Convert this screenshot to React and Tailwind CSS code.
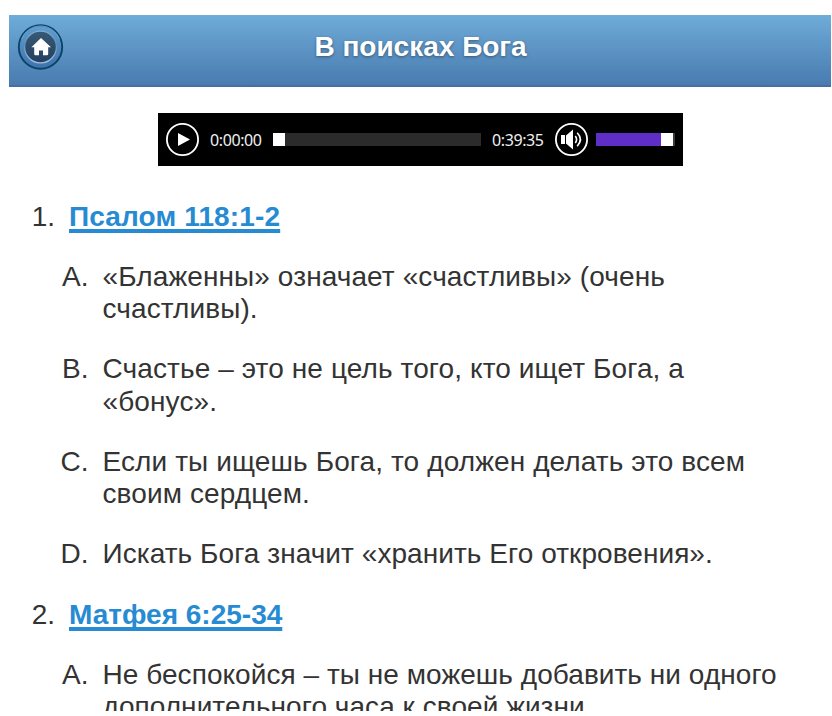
const outline = [
  {
    title: 'Псалом 118:1-2',
    spacing: 'tracking-[0.14px]',
    points: [
      { spacing: 'tracking-[0.1px]', lines: ['«Блаженны» означает «счастливы» (очень', 'счастливы).'] },
      { spacing: 'tracking-[0.11px]', lines: ['Счастье – это не цель того, кто ищет Бога, а', '«бонус».'] },
      { spacing: 'tracking-[0.11px]', lines: ['Если ты ищешь Бога, то должен делать это всем', 'своим сердцем.'] },
      { spacing: 'tracking-[0.06px]', lines: ['Искать Бога значит «хранить Его откровения».'] },
    ],
  },
  {
    title: 'Матфея 6:25-34',
    spacing: 'tracking-normal',
    points: [
      {
        spacing: 'tracking-[0.05px]',
        lines: ['Не беспокойся – ты не можешь добавить ни одного', 'дополнительного часа к своей жизни.'],
      },
    ],
  },
];

function HomeButton() {
  return (
    <button className="ml-[8px] mt-[8px] h-[48px] w-[48px] shrink-0" aria-label="home">
      <svg width="48" height="48" viewBox="0 0 48 48">
        <defs>
          <linearGradient id="ring" x1="0" y1="0" x2="0" y2="1">
            <stop offset="0" stopColor="#5f9fce" />
            <stop offset="1" stopColor="#3f72ab" />
          </linearGradient>
          <linearGradient id="disc" x1="0" y1="0" x2="0" y2="1">
            <stop offset="0" stopColor="#375a75" />
            <stop offset="1" stopColor="#263f60" />
          </linearGradient>
          <linearGradient id="rim" x1="0" y1="0" x2="0" y2="1">
            <stop offset="0" stopColor="#7eaed6" />
            <stop offset="0.4" stopColor="#5f8fbb" />
            <stop offset="1" stopColor="#a3c3e6" />
          </linearGradient>
        </defs>
        <circle cx="23.5" cy="24" r="21.7" fill="url(#ring)" stroke="#0b4468" strokeWidth="1.9" />
        <path d="M4.5 16a20.3 20.3 0 0 1 38 0" fill="none" stroke="#8bbce2" strokeWidth="1" opacity=".65" />
        <circle cx="23.5" cy="24" r="15.9" fill="url(#disc)" stroke="url(#rim)" strokeWidth="1.3" />
        <path d="M24 15 34 24.2H31.2V31Q31.2 32.2 30 32.2H26V27.4H22V32.2H18.4Q17.2 32.2 17.2 31V24.2H14.4Z" fill="#fff" />
      </svg>
    </button>
  );
}

function Player() {
  return (
    <div className="mx-auto mt-[26px] flex h-[53px] w-[525px] shrink-0 items-center bg-black pl-2 font-['Noto_Sans','Open_Sans',sans-serif] text-[16px] text-[#f0f0f0]">
      <svg width="33" height="33" viewBox="0 0 33 33">
        <circle cx="16.5" cy="16.5" r="15.6" fill="none" stroke="#fff" strokeWidth="1.8" />
        <path d="M12 10v13l12-6.5Z" fill="#fff" />
      </svg>
      <span className="ml-[11px] w-[52px] whitespace-nowrap tracking-[-0.4px]">0:00:00</span>
      <div className="ml-[11px] h-[13px] w-[208px] bg-[#2b2b2b]">
        <div className="h-full w-3 bg-white" />
      </div>
      <span className="ml-[11px] w-[52px] whitespace-nowrap tracking-[-0.4px]">0:39:35</span>
      <svg className="ml-[11px]" width="33" height="33" viewBox="0 0 33 33">
        <circle cx="16.5" cy="16.5" r="15.6" fill="none" stroke="#fff" strokeWidth="1.8" />
        <path d="M6 12h4v9H6ZM11 12.5 18 6.5v20l-7-6Z" fill="#fff" />
        <path d="M20.3 13q2.6 3.5 0 7M22.2 9.8q6.4 6.7 0 13.4" fill="none" stroke="#fff" strokeWidth="1.6" />
      </svg>
      <div className="ml-2 flex h-[13px] w-[79px] bg-[#3a3a3a]">
        <div className="w-[65px] bg-[#5f2ec7]" />
        <div className="w-3 bg-white" />
      </div>
    </div>
  );
}

export default function App() {
  return (
    <div className="h-[716px] w-[832px] bg-white font-['Liberation_Sans',Arial,sans-serif] text-[#333]">
      <div className="flex h-[711px] flex-col overflow-hidden pt-[15px]">
        <header className="ml-[9px] flex h-[72px] w-[822px] shrink-0 border-b-2 border-[#456f9f] bg-linear-to-b from-[#6facd8] to-[#497bb0]">
          <HomeButton />
          <h1 className="mt-[16px] flex-1 pr-[55px] text-center text-[28px] leading-8 font-bold text-white [text-shadow:0_1px_3px_rgba(0,0,0,0.4)]">
            В поисках Бога
          </h1>
        </header>
        <div className="flex w-[841px] shrink-0">
          <Player />
        </div>
        <main className="mt-[34.6px] text-[28px] leading-[32.25px]">
          {outline.map((section, i) => (
            <section key={section.title}>
              <h2 className="mb-7 flex">
                <span className="mr-[14px] w-[55px] text-right">{i + 1}.</span>
                <a className={`font-bold text-[#268bd2] underline decoration-4 underline-offset-3 [text-decoration-skip-ink:none] ${section.spacing}`}>
                  {section.title}
                </a>
              </h2>
              {section.points.map((point, j) => (
                <div key={point.lines[0]} className="mb-7 flex">
                  <span className="mr-[14px] w-[88.5px] text-right">{'ABCD'[j]}.</span>
                  <p className={`whitespace-nowrap ${point.spacing}`}>
                    {point.lines.map((line) => (
                      <span key={line} className="block">{line}</span>
                    ))}
                  </p>
                </div>
              ))}
            </section>
          ))}
        </main>
      </div>
    </div>
  );
}
